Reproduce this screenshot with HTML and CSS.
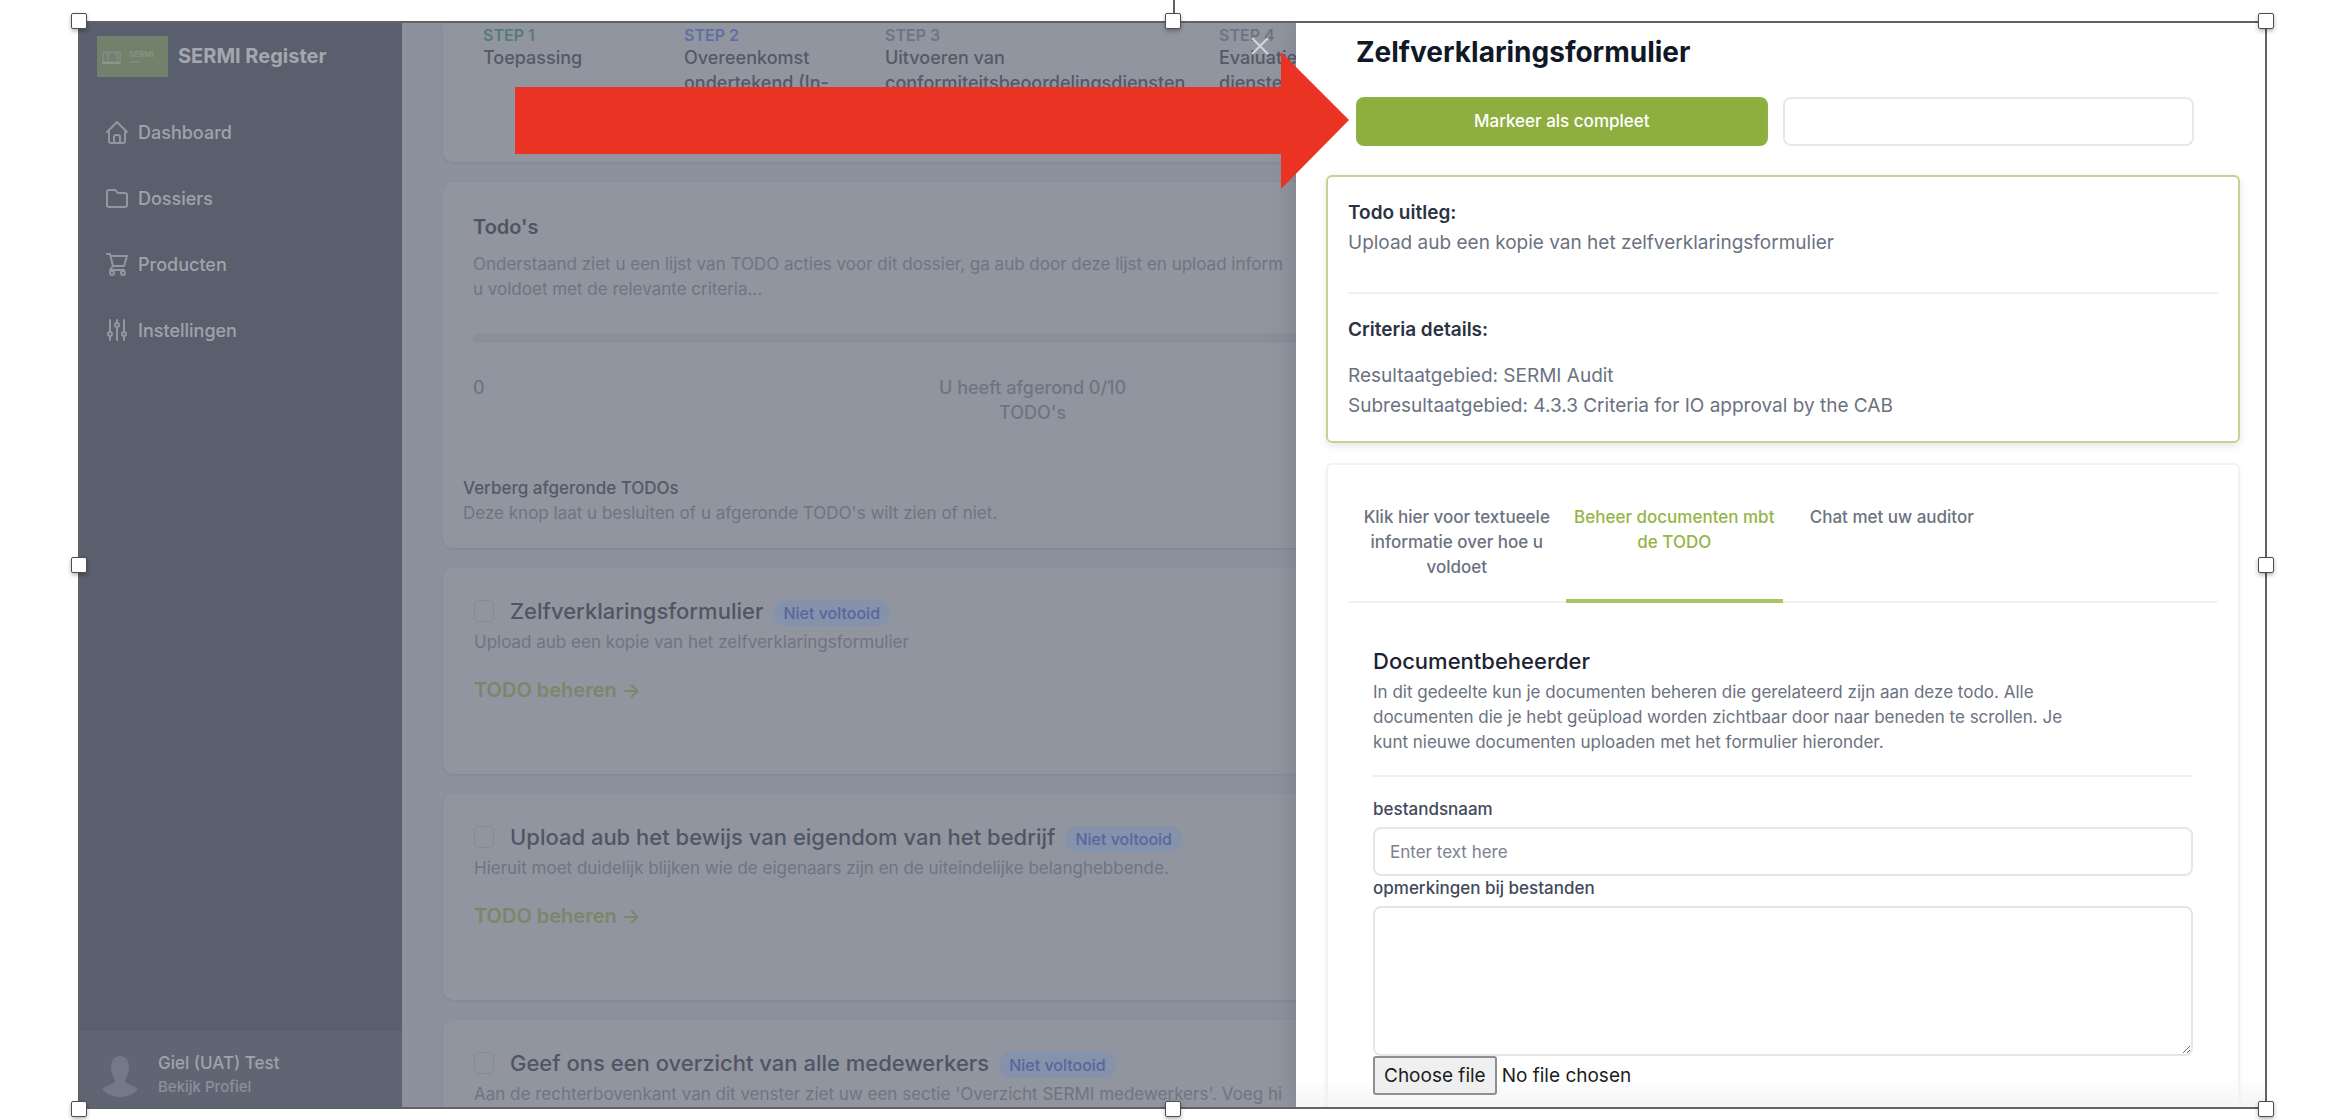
FILE: index.html
```html
<!DOCTYPE html>
<html lang="nl">
<head>
    <meta charset="UTF-8">
    <meta name="viewport" content="width=device-width, initial-scale=1.0">
    <title>SERMI Register</title>
    <link rel="stylesheet" href="styles.css">
</head>
<body>
    <div class="frame">
        <div class="app">
            <aside class="sidebar">
                <div class="brand">
                    <svg class="brand-logo" viewBox="0 0 71 41" aria-hidden="true">
                        <rect width="71" height="41" fill="#73806c"/>
                        <path d="M6 16h17v10H6z" fill="none" stroke="#8b9590" stroke-width="1"/>
                        <path d="M5 27h19" fill="none" stroke="#8b9590" stroke-width="2"/>
                        <path d="M9 17l2 2 2-2M11 19v5M17 18h3v7" fill="none" stroke="#8b9590" stroke-width="1"/>
                        <text x="32" y="21" class="logo-text">SERMI</text>
                        <path d="M33 26h10" stroke="#7f8a79" stroke-width="2"/>
                    </svg>
                    <span class="brand-name">SERMI Register</span>
                </div>
                <nav class="nav">
                    <a href="#" class="nav-link">
                        <svg class="icon" viewBox="0 0 22 24"><path d="M1 12 11 2l10 10M3 11v10q0 2 2 2h12q2 0 2-2V11M8 23v-6q0-2 2-2h2q2 0 2 2v6"/></svg>
                        Dashboard
                    </a>
                    <a href="#" class="nav-link">
                        <svg class="icon" viewBox="0 0 22 24"><path d="M1 6q0-2 2-2h6l3 3h7q2 0 2 2v10q0 2-2 2H3q-2 0-2-2z"/></svg>
                        Dossiers
                    </a>
                    <a href="#" class="nav-link">
                        <svg class="icon" viewBox="0 0 22 24"><path d="M1 2h3l3 12h11l3-10H5M7 14l-3 4h14"/><circle cx="6" cy="21" r="2"/><circle cx="17" cy="21" r="2"/></svg>
                        Producten
                    </a>
                    <a href="#" class="nav-link">
                        <svg class="icon" viewBox="0 0 22 24"><path d="M4 2v12M4 19v3M11 2v3M11 10v12M18 2v12M18 19v3"/><circle cx="4" cy="16" r="2"/><circle cx="11" cy="7" r="2"/><circle cx="18" cy="16" r="2"/></svg>
                        Instellingen
                    </a>
                </nav>
                <a href="#" class="profile">
                    <svg class="avatar" viewBox="0 0 36 41" aria-hidden="true">
                        <path d="M18 0c6 0 9 5 9 11 0 6-3 10-4 14 0 3 9 4 13 8-5 6-11 8-18 8S5 39 0 33c4-4 13-5 13-8-1-4-4-8-4-14C9 5 12 0 18 0z" fill="#747987"/>
                    </svg>
                    <span>
                        <span class="profile-name">Giel (UAT) Test</span>
                        <span class="profile-sub">Bekijk Profiel</span>
                    </span>
                </a>
            </aside>

            <main class="main">
                <ol class="card steps">
                    <li><span class="step-nr done">STEP 1</span>Toepassing</li>
                    <li><span class="step-nr current">STEP 2</span>Overeenkomst<br>ondertekend (In-</li>
                    <li><span class="step-nr">STEP 3</span>Uitvoeren van<br>conformiteitsbeoordelingsdiensten</li>
                    <li><span class="step-nr">STEP 4</span>Evaluatie<br>diensten</li>
                </ol>

                <section class="card todos">
                    <h2>Todo's</h2>
                    <p>Onderstaand ziet u een lijst van TODO acties voor dit dossier, ga aub door deze lijst en upload inform<br>u voldoet met de relevante criteria...</p>
                    <div class="progress"></div>
                    <div class="progress-labels">
                        <span>0</span>
                        <span class="progress-count">U heeft afgerond 0/10 TODO's</span>
                    </div>
                </section>
                <section class="card hide-done">
                    <h3>Verberg afgeronde TODOs</h3>
                    <p>Deze knop laat u besluiten of u afgeronde TODO's wilt zien of niet.</p>
                </section>

                <article class="card todo">
                    <div class="todo-head">
                        <input type="checkbox" id="todo1">
                        <label for="todo1">Zelfverklaringsformulier</label>
                        <span class="badge">Niet voltooid</span>
                    </div>
                    <p>Upload aub een kopie van het zelfverklaringsformulier</p>
                    <a href="#">TODO beheren →</a>
                </article>
                <article class="card todo">
                    <div class="todo-head">
                        <input type="checkbox" id="todo2">
                        <label for="todo2">Upload aub het bewijs van eigendom van het bedrijf</label>
                        <span class="badge">Niet voltooid</span>
                    </div>
                    <p>Hieruit moet duidelijk blijken wie de eigenaars zijn en de uiteindelijke belanghebbende.</p>
                    <a href="#">TODO beheren →</a>
                </article>
                <article class="card todo">
                    <div class="todo-head">
                        <input type="checkbox" id="todo3">
                        <label for="todo3">Geef ons een overzicht van alle medewerkers</label>
                        <span class="badge">Niet voltooid</span>
                    </div>
                    <p>Aan de rechterbovenkant van dit venster ziet uw een sectie 'Overzicht SERMI medewerkers'. Voeg hi</p>
                </article>
                <button type="button" class="close" aria-label="Sluiten">
                    <svg viewBox="0 0 18 18"><path d="M1 1l16 16M17 1L1 17"/></svg>
                </button>
            </main>

            <section class="panel">
                <h1>Zelfverklaringsformulier</h1>
                <div class="actions">
                    <button type="button" class="btn btn-green">Markeer als compleet</button>
                    <button type="button" class="btn" aria-label="Annuleren"></button>
                </div>

                <div class="box box-green">
                    <h2>Todo uitleg:</h2>
                    <p>Upload aub een kopie van het zelfverklaringsformulier</p>
                    <hr>
                    <h2>Criteria details:</h2>
                    <p class="criteria">Resultaatgebied: SERMI Audit<br>Subresultaatgebied: 4.3.3 Criteria for IO approval by the CAB</p>
                </div>

                <div class="box">
                    <nav class="tabs">
                        <a href="#">Klik hier voor textueele informatie over hoe u voldoet</a>
                        <a href="#" class="active">Beheer documenten mbt de TODO</a>
                        <a href="#">Chat met uw auditor</a>
                    </nav>
                    <form class="documents">
                        <h3>Documentbeheerder</h3>
                        <p>In dit gedeelte kun je documenten beheren die gerelateerd zijn aan deze todo. Alle documenten die je hebt geüpload worden zichtbaar door naar beneden te scrollen. Je kunt nieuwe documenten uploaden met het formulier hieronder.</p>
                        <hr>
                        <label class="field-label" for="filename">bestandsnaam</label>
                        <input type="text" id="filename" placeholder="Enter text here">
                        <label class="field-label" for="remarks">opmerkingen bij bestanden</label>
                        <textarea id="remarks"></textarea>
                        <div class="file">
                            <input type="file" id="file">
                            <label for="file">Choose file</label>
                            <span>No file chosen</span>
                        </div>
                    </form>
                </div>
            </section>
        </div>

        <!-- arrow to the complete button -->
        <svg class="arrow" viewBox="0 0 834 137"><path d="M0 35h766V0l68 68-68 69v-35H0z"/></svg>

        <!-- selection handles -->
        <i class="stem"></i>
        <i class="handle top left"></i>
        <i class="handle top center"></i>
        <i class="handle top right"></i>
        <i class="handle middle left"></i>
        <i class="handle middle right"></i>
        <i class="handle bottom left"></i>
        <i class="handle bottom center"></i>
        <i class="handle bottom right"></i>
    </div>
</body>
</html>
```
FILE: styles.css
```css
* {
    box-sizing: border-box;
}

body {
    margin: 0;
    background: #fff;
    font-family: Inter, "Liberation Sans", sans-serif;
    font-size: 17px;
    line-height: 25px;
    overflow: hidden;
}

h1, h2, h3, p, ol {
    margin: 0;
    padding: 0;
}

a {
    text-decoration: none;
}

.frame {
    position: relative;
    height: calc(100vh - 32px);
    margin: 21px 61px 11px 78px;
    border: 2px solid #616264;
}

.app {
    display: grid;
    grid-template-columns: 322px 894fr 969fr;
    height: 100%;
    overflow: hidden;
}

/* sidebar */
.sidebar {
    display: flex;
    flex-direction: column;
    min-height: 0;
    background: #5a5f6d;
    font-weight: 500;
}

.brand {
    display: flex;
    align-items: center;
    gap: 10px;
    padding: 13px 17px 0;
}

.brand-logo {
    width: 71px;
    height: 41px;
}

.logo-text {
    font-size: 8px;
    font-weight: 700;
    fill: #87917f;
}

.brand-name {
    font-size: 20px;
    font-weight: 700;
    color: #a3a7b0;
}

.nav {
    flex: 1;
    display: flex;
    flex-direction: column;
    gap: 16px;
    padding: 30px 26px;
}

.nav-link {
    display: flex;
    align-items: center;
    gap: 10px;
    height: 50px;
    font-size: 18px;
    color: #9fa3ac;
}

.icon {
    width: 22px;
    height: 24px;
    fill: none;
    stroke: #9196a1;
    stroke-width: 2;
    stroke-linejoin: round;
    stroke-linecap: round;
}

.profile {
    display: flex;
    align-items: center;
    gap: 20px;
    height: 76px;
    padding: 10px 22px 0;
    background: #606573;
}

.avatar {
    width: 36px;
    height: 41px;
    margin-top: 4px;
}

.profile-name,
.profile-sub {
    display: block;
    color: #9fa3ac;
}

.profile-sub {
    font-size: 15px;
    line-height: 22px;
    color: #8b909b;
}

/* main column */
.main {
    position: relative;
    min-width: 0;
    padding-left: 41px;
    overflow: hidden;
    background: #8d919d;
    color: #6f7482;
    white-space: nowrap;
}

.card {
    margin: 0 -40px 20px 0;
    border-radius: 10px;
    background: #91959f;
    box-shadow: 0 1px 3px #828692;
}

.steps {
    display: grid;
    grid-template-columns: 201px 201px 334px 1fr;
    min-height: 139px;
    padding: 2px 40px;
    border-radius: 0 0 10px 10px;
    list-style: none;
    font-size: 18px;
    font-weight: 500;
    color: #545967;
}

.step-nr {
    display: block;
    font-size: 16px;
    font-weight: 600;
    line-height: 20px;
    color: #6f7482;
}

.step-nr.done {
    color: #557c78;
}

.step-nr.current {
    color: #5f70a6;
}

.todos {
    margin-bottom: 0;
    padding: 30px;
    border-radius: 10px 10px 0 0;
    box-shadow: 0 0 2px #868a96;
}

.todos h2 {
    margin-bottom: 10px;
    font-size: 20px;
    font-weight: 600;
    line-height: 30px;
    color: #4f5462;
}

.progress {
    height: 10px;
    margin: 31px 0 32px;
    border-radius: 5px;
    background: #8b8f9a;
}

.progress-labels {
    display: flex;
    gap: 448px;
    font-size: 18px;
    font-weight: 500;
}

.progress-count {
    width: 200px;
    text-align: center;
    white-space: normal;
}

.hide-done {
    position: relative;
    padding: 21px 20px 22px;
    border-radius: 0 0 10px 10px;
    box-shadow: 0 2px 2px #868a96;
}

.hide-done h3 {
    font-size: 17px;
    font-weight: 500;
    color: #545967;
}

.todo {
    height: 206px;
    padding: 28px 31px;
}

.todo-head {
    display: flex;
    align-items: center;
    height: 30px;
    margin-bottom: 4px;
}

.todo-head input {
    appearance: none;
    width: 20px;
    height: 22px;
    margin: 0 16px 0 0;
    border: 1px solid #858a96;
    border-radius: 5px;
}

.todo-head label {
    font-size: 22px;
    font-weight: 500;
    color: #505564;
}

.badge {
    height: 26px;
    margin: 4px 0 0 10px;
    padding: 0 10px;
    border-radius: 13px;
    background: #8492ac;
    font-size: 16px;
    font-weight: 500;
    line-height: 26px;
    color: #5a669a;
}

.todo a {
    display: inline-block;
    margin-top: 20px;
    font-size: 20px;
    font-weight: 600;
    line-height: 30px;
    color: #79876a;
}

.close {
    position: absolute;
    top: 14px;
    right: 27px;
    width: 18px;
    height: 18px;
    padding: 0;
    border: 0;
    background: none;
}

.close svg {
    display: block;
    fill: none;
    stroke: #d3d5da;
    stroke-width: 2;
}

/* slide-over panel */
.panel {
    position: relative;
    min-width: 0;
    padding: 9px 25px 0 30px;
    overflow: hidden;
    background: linear-gradient(to top, #f5f5f5, #fff 30px);
    box-shadow: 0 0 24px rgba(60, 65, 80, .25);
    color: #6b7280;
}

.panel h1 {
    margin-left: 30px;
    font-size: 28px;
    font-weight: 700;
    line-height: 40px;
    color: #111827;
}

.actions {
    display: grid;
    grid-template-columns: 1fr 1fr;
    gap: 15px;
    margin: 25px 46px 29px 30px;
}

.btn {
    height: 49px;
    border: 2px solid #e7e8eb;
    border-radius: 8px;
    background: #fff;
    font: 500 17px/25px Inter, "Liberation Sans", sans-serif;
}

.btn-green {
    border-color: #8fb042;
    background: #8eae40;
    color: #fff;
}

.box {
    padding: 40px 20px;
    border: 2px solid #f1f2f3;
    border-radius: 6px;
    box-shadow: 0 2px 4px rgba(0, 0, 0, .05);
}

.box-green {
    margin-bottom: 20px;
    padding: 21px 20px 20px;
    border-color: #c1d491;
    box-shadow: 0 3px 8px rgba(0, 0, 0, .1);
    font-size: 19px;
    line-height: 30px;
}

.box h2 {
    font-size: 19px;
    font-weight: 600;
    color: #2b3342;
}

.box hr {
    height: 2px;
    margin: 34px 0 21px;
    border: 0;
    background: #eff0f1;
}

.criteria {
    margin-top: 16px;
}

.tabs {
    display: grid;
    grid-template-columns: repeat(4, 1fr);
    border-bottom: 2px solid #f1f2f4;
    font-weight: 500;
    text-align: center;
}

.tabs a {
    margin-bottom: -2px;
    padding: 0 5px 23px;
    color: #6b7280;
}

.tabs .active {
    border-bottom: 4px solid #aac463;
    color: #96b548;
}

.documents {
    padding: 43px 25px 0;
}

.documents h3 {
    margin-bottom: 4px;
    font-size: 22px;
    font-weight: 500;
    line-height: 30px;
    color: #1c2433;
}

.documents p {
    max-width: 710px;
}

.documents hr {
    margin: 20px 0;
}

.field-label {
    display: block;
    font-weight: 500;
    color: #414a5a;
}

.documents input[type="text"],
.documents textarea {
    display: block;
    width: 100%;
    height: 49px;
    margin-top: 5px;
    padding: 0 15px;
    border: 2px solid #e3e6ea;
    border-radius: 8px;
    background: #fff;
    font: 17px/25px Inter, "Liberation Sans", sans-serif;
}

.documents textarea {
    height: 150px;
}

.documents ::placeholder {
    color: #7b818d;
}

.file {
    display: flex;
    align-items: center;
    gap: 5px;
    font-size: 19px;
    color: #1c1c1c;
}

.file input {
    position: absolute;
    width: 1px;
    height: 1px;
    opacity: 0;
}

.file label {
    height: 39px;
    padding: 0 9px;
    border: 2px solid #8f8f8f;
    border-radius: 3px;
    background: #efefef;
    line-height: 35px;
}

/* annotation layer */
.arrow {
    position: absolute;
    top: 29px;
    left: 435px;
    width: 834px;
    height: 137px;
    fill: #ea3323;
}

.stem {
    position: absolute;
    top: -23px;
    left: 50%;
    width: 2px;
    height: 16px;
    background: #616264;
}

.handle {
    position: absolute;
    width: 16px;
    height: 16px;
    border: 1px solid #4d4d4d;
    border-radius: 2px;
    background: #fff;
    box-shadow: 0 2px 4px rgba(0, 0, 0, .3);
}

.top { top: -10px; }
.middle { top: calc(50% - 8px); }
.bottom { bottom: -10px; }
.left { left: -9px; }
.center { left: calc(50% - 8px); }
.right { right: -9px; }
```
